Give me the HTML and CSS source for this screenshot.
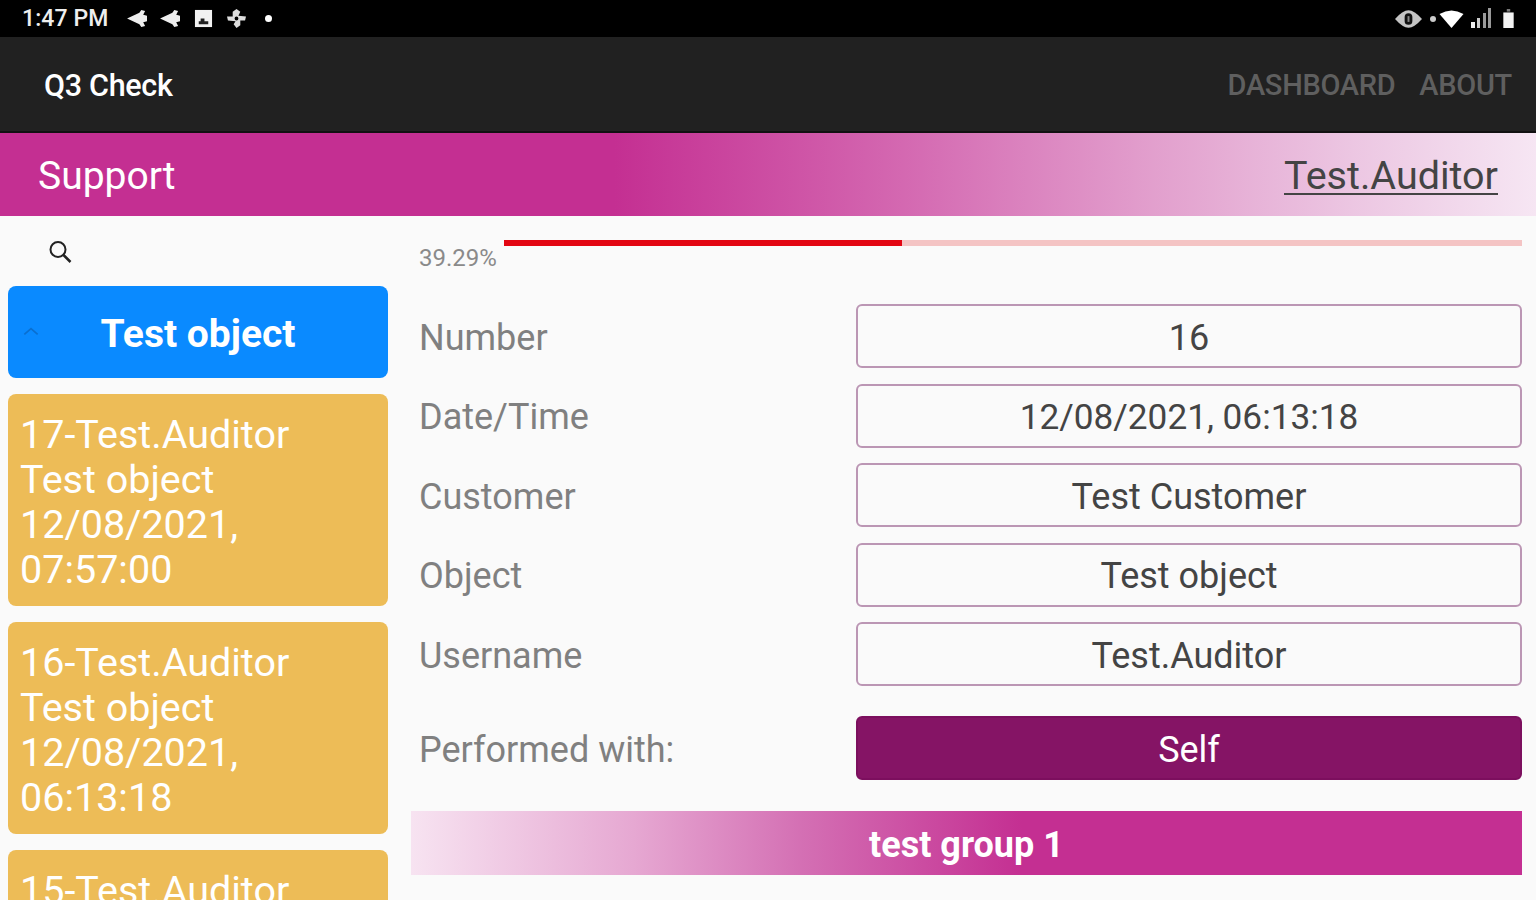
FILE: index.html
```html
<!DOCTYPE html>
<html lang="en">
<head>
  <meta charset="UTF-8">
  <title>Q3 Check</title>
  <link rel="stylesheet" href="styles.css">
</head>
<body>

<!-- STATUS BAR -->
<div class="statusbar">
  <div class="status-left">
    <span class="clock">1:47 PM</span>
    <svg class="sicon" viewBox="0 0 22 20"><path d="M0 10 L13 4 L15 1 L19 2 L17 6 L21 7 V13 L17 14 L19 18 L15 19 L13 16 Z" fill="#eee"/></svg>
    <svg class="sicon" viewBox="0 0 22 20"><path d="M0 10 L13 4 L15 1 L19 2 L17 6 L21 7 V13 L17 14 L19 18 L15 19 L13 16 Z" fill="#eee"/></svg>
    <svg class="sicon" viewBox="0 0 22 20"><path d="M2 1 H20 V19 H2 Z" fill="#f2f2f2"/><path d="M6 13 H16 V16 H6 Z M8 10 H12 V13 H8 Z" fill="#222"/></svg>
    <svg class="sicon" viewBox="0 0 22 20"><path d="M11 0 L15 3 L13 7 L21 8 L20 12 L15 12 L15 17 L11 20 L8 16 L10 13 L2 12 L1 8 L7 8 L7 3 Z M11 8 A2 2 0 1 0 11 12 A2 2 0 1 0 11 8 Z" fill="#ddd" fill-rule="evenodd"/></svg>
    <span class="dot"></span>
  </div>
  <div class="status-right">
    <svg class="eye" viewBox="0 0 28 20"><path d="M0 10 Q8 1 14 1 Q20 1 28 10 Q20 19 14 19 Q8 19 0 10 Z" fill="#c4c4c4"/><rect x="10" y="4" width="8" height="12" rx="4" fill="#111"/><rect x="13" y="7" width="2" height="6" fill="#888"/></svg>
    <span class="dot small"></span>
    <svg class="wifi" viewBox="0 0 24 18"><path d="M0 4 Q12 -3 24 4 L12 18 Z" fill="#fff"/></svg>
    <svg class="signal" viewBox="0 0 22 22"><path d="M1 15h4v6H1z" fill="#eee"/><path d="M7 11h3v10H7z" fill="#ccc"/><path d="M13 6h3v15h-3z M18 1h3v20h-3z" fill="#999"/></svg>
    <svg class="battery" viewBox="0 0 14 22"><path d="M5 0h4v3h-4z" fill="#777"/><path d="M1 4h12v18H1z" fill="#f2f2f2"/></svg>
  </div>
</div>

<!-- APP BAR -->
<header class="appbar">
  <div class="app-title">Q3 Check</div>
  <nav class="app-nav">
    <a href="#">DASHBOARD</a>
    <a href="#">ABOUT</a>
  </nav>
</header>

<div class="support-bar">
  <span>Support</span>
  <a href="#" class="user-link">Test.Auditor</a>
</div>

<div class="content">
  <aside class="sidebar">
    <div class="search-row">
      <svg class="search-icon" viewBox="0 0 24 24"><circle cx="10.500" cy="10.500" r="7.500" fill="none" stroke="#222" stroke-width="2"/><path d="M16 16 L23 23" stroke="#222" stroke-width="2.500"/></svg>
    </div>
    <div class="group-card">
      <svg class="chevron" viewBox="0 0 20 12"><path d="M2 10 L10 3 L18 10" fill="none" stroke="#0a6fd0" stroke-width="2"/></svg>
      Test object
    </div>
    <div class="audit-card">17-Test.Auditor<br>Test object<br>12/08/2021,<br>07:57:00</div>
    <div class="audit-card">16-Test.Auditor<br>Test object<br>12/08/2021,<br>06:13:18</div>
    <div class="audit-card">15-Test.Auditor</div>
  </aside>

  <main class="main">
    <div class="progress-row">
      <span class="percent">39.29%</span>
      <div class="progress"><div class="progress-fill" style="width: 39.05%"></div></div>
    </div>

    <div class="form">
      <div class="form-row"><label>Number</label><div class="field">16</div></div>
      <div class="form-row"><label>Date/Time</label><div class="field date">12/08/2021, 06:13:18</div></div>
      <div class="form-row"><label>Customer</label><div class="field">Test Customer</div></div>
      <div class="form-row"><label>Object</label><div class="field">Test object</div></div>
      <div class="form-row"><label>Username</label><div class="field">Test.Auditor</div></div>
      <div class="form-row performed"><label>Performed with:</label><div class="field solid">Self</div></div>
    </div>

    <div class="group-bar">test group 1</div>
  </main>
</div>

</body>
</html>
```

FILE: styles.css
```css
html, body { height: 900px; overflow: hidden; }

body {
  margin: 0;
  font-family: Roboto, "Liberation Sans", sans-serif;
  background: #fafafa;
}

.statusbar {
  height: 37px;
  background: #000;
  display: flex;
  justify-content: space-between;
  align-items: center;
  padding: 0 21px 0 22px;
  color: #eee;
}

.status-left, .status-right { display: flex; align-items: center; }

.clock { font-size: 23px; font-weight: 500; margin-right: 18px; letter-spacing: 0.1px; }

.sicon { width: 21px; height: 19px; margin-right: 12px; }

.dot {
  width: 7px;
  height: 7px;
  border-radius: 50%;
  background: #fff;
  margin-left: 6px;
}

.dot.small { width: 6px; height: 6px; margin: 0 3px 0 8px; background: #ccc; }

.eye { width: 27px; height: 20px; }
.wifi { width: 25px; height: 18px; }
.signal { width: 22px; height: 22px; margin: 0 10px 2px 6px; }
.battery { width: 13px; height: 19px; }

.appbar {
  height: 96px;
  box-sizing: border-box;
  background: #212121;
  border-bottom: 2px solid #111;
  display: flex;
  justify-content: space-between;
  align-items: center;
  padding: 2px 24px 0 44px;
}

.app-title { color: #fff; font-size: 30.500px; font-weight: 500; letter-spacing: -0.3px; }

.app-nav { display: flex; gap: 24px; }

.app-nav a { color: #5f5f5f; font-size: 29px; font-weight: 500; text-decoration: none; letter-spacing: -0.3px; }

.support-bar {
  height: 83px;
  box-sizing: border-box;
  background: linear-gradient(to right, #c42f92 0%, #c42f92 40%, #d56cb3 60%, #e29fcd 75%, #ecc6e2 88%, #f6e6f3 100%);
  display: flex;
  justify-content: space-between;
  align-items: center;
  padding: 2px 38px 0;
  color: #fff;
  font-size: 39px;
}

.user-link { color: #444; font-size: 39.500px; text-decoration: underline; text-decoration-thickness: 2px; text-underline-offset: 4px; }

.content { display: flex; }

.sidebar { width: 380px; padding: 0 8px; flex-shrink: 0; }

.search-row { height: 70px; display: flex; align-items: flex-start; padding: 23px 0 0 39px; box-sizing: border-box; }

.search-icon { width: 25px; height: 24px; }

.group-card {
  position: relative;
  height: 92px;
  background: #0a8aff;
  border-radius: 8px;
  color: #fff;
  font-size: 39px;
  font-weight: 700;
  display: flex;
  justify-content: center;
  align-items: center;
  padding-top: 3px;
  box-sizing: border-box;
  margin-bottom: 16px;
}

.chevron { position: absolute; left: 14px; top: 40px; width: 18px; height: 10px; }

.audit-card {
  height: 212px;
  box-sizing: border-box;
  background: #edbc57;
  border-radius: 8px;
  color: #fff;
  font-size: 39.500px;
  line-height: 45px;
  padding: 18px 12px;
  margin-bottom: 16px;
}

.main { flex: 1; padding: 0 14px 0 15px; min-width: 0; }

.progress-row { height: 88px; box-sizing: border-box; display: flex; padding: 24px 0 0 8px; }

.percent { color: #8a8a8a; font-size: 24px; margin-top: 4px; width: 85px; flex-shrink: 0; }

.progress { flex: 1; height: 6px; background: #f4c4c4; }

.progress-fill { height: 100%; background: #e30613; }

.form-row {
  display: flex;
  align-items: center;
  height: 64px;
  margin-bottom: 15.500px;
}

.form-row label { width: 445px; padding: 3px 0 0 8px; box-sizing: border-box; flex-shrink: 0; color: #808080; font-size: 36px; }

.field {
  flex: 1;
  height: 64px;
  box-sizing: border-box;
  border: 2px solid #bb96b4;
  border-radius: 6px;
  background: #fafafa;
  display: flex;
  align-items: center;
  justify-content: center;
  padding-top: 3px;
  color: #444;
  font-size: 36px;
}

.field.date { font-size: 35.200px; }

.performed { margin-top: 30px; margin-bottom: 31px; }

.field.solid { background: #851465; border-color: #7c0f5e; color: #fff; }

.group-bar {
  height: 64px;
  background: linear-gradient(to right, #f7e3f1 0%, #e6a8d2 20%, #d470b4 35%, #c42f92 55%, #c42f92 100%);
  display: flex;
  align-items: center;
  justify-content: center;
  padding-top: 3px;
  box-sizing: border-box;
  color: #fff;
  font-size: 36px;
  font-weight: 700;
}
```
